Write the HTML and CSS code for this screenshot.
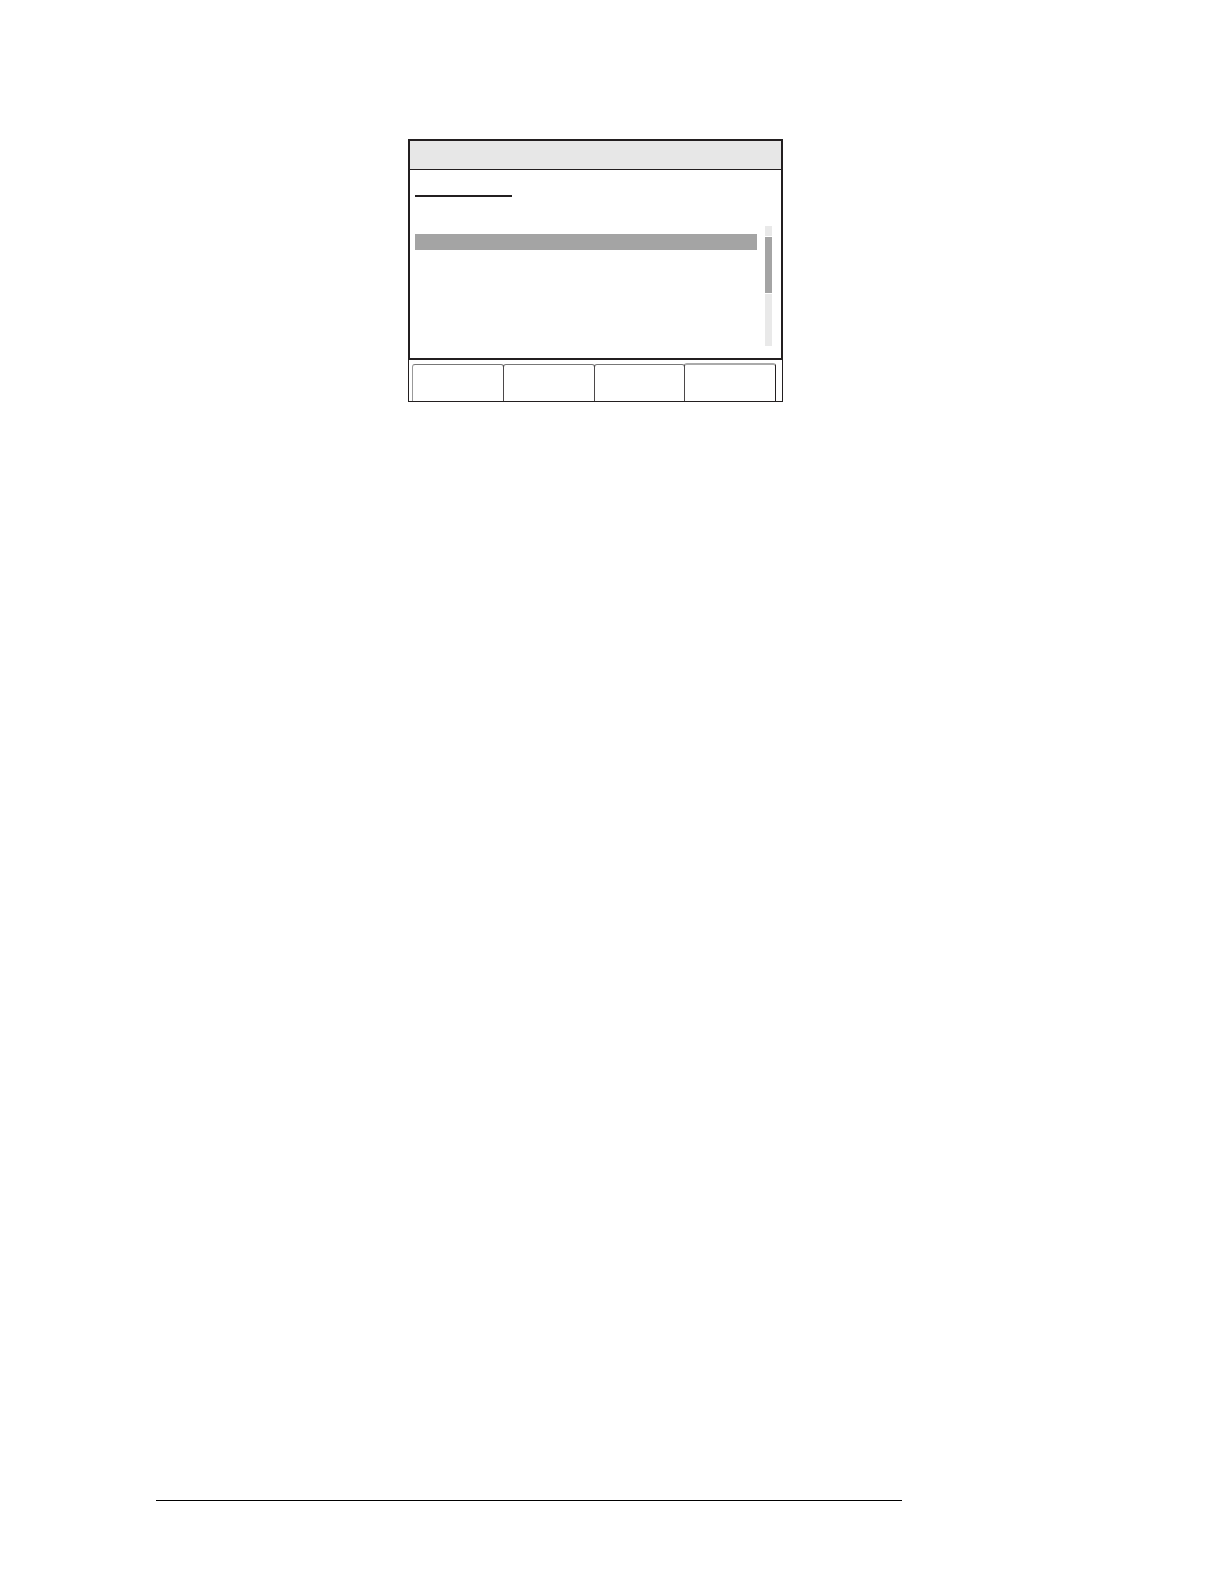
FILE: index.html
```html
<!DOCTYPE html>
<html lang="en">
<head>
  <meta charset="utf-8">
  <meta name="viewport" content="width=device-width, initial-scale=1">
  <title>Phone display</title>
  <link rel="stylesheet" href="styles.css">
</head>
<body>
  <main class="page">
    <section class="phone" aria-label="Phone display">
      <div class="screen">
        <header class="title-bar"></header>
        <div class="content">
          <div class="list">
            <div class="heading-rule"></div>
            <div class="selected-row"></div>
          </div>
          <div class="scrollbar" aria-hidden="true">
            <div class="track-above"></div>
            <div class="thumb"></div>
            <div class="track-below"></div>
          </div>
        </div>
      </div>
      <div class="softkeys">
        <button class="softkey softkey-first" type="button" aria-label="Softkey 1"></button>
        <button class="softkey" type="button" aria-label="Softkey 2"></button>
        <button class="softkey" type="button" aria-label="Softkey 3"></button>
        <button class="softkey softkey-last" type="button" aria-label="Softkey 4"></button>
      </div>
    </section>
    <hr class="footer-rule">
  </main>
</body>
</html>
```
FILE: styles.css
```css
* {
  box-sizing: border-box;
}

body {
  margin: 0;
  background: #fff;
  font-family: "Liberation Sans", sans-serif;
}

.page {
  display: flex;
  flex-direction: column;
  justify-content: space-between;
  min-height: 100vh;
  padding: 139px 322px 83px 156px;
}

.phone {
  width: 100%;
  max-width: 375px;
  margin-left: 252px;
}

.screen {
  border: 2px solid #231f20;
}

.title-bar {
  height: 29px;
  background: #e7e7e7;
  border-bottom: 1px solid #231f20;
}

.content {
  display: flex;
  gap: 8px;
  padding: 25px 9px 12px 5px;
}

.list {
  flex: 1;
}

.heading-rule {
  width: 97px;
  height: 2px;
  background: #231f20;
}

.selected-row {
  height: 16px;
  margin-top: 37px;
  background: #a4a4a4;
}

.scrollbar {
  display: flex;
  flex-direction: column;
  gap: 1px;
  width: 7px;
  margin-top: 31px;
}

.track-above,
.track-below {
  background: #e9e9e9;
}

.track-above {
  height: 10px;
}

.thumb {
  height: 56px;
  background: #a4a4a4;
}

.track-below {
  height: 52px;
}

.softkeys {
  display: flex;
  align-items: flex-end;
  padding: 3px 6px 0 4px;
  border: solid #231f20;
  border-width: 0 1px 1px;
}

.softkey {
  flex: 1;
  height: 37px;
  margin: 0 0 0 -1px;
  padding: 0;
  background: none;
  border: 1px solid #4b4849;
  border-top-color: #777;
  border-bottom: 0;
  border-radius: 3px 3px 0 0;
}

.softkey-first {
  border-left-color: #999;
}

.softkey-last {
  height: 38px;
  border-top: 2px solid #aaa;
  border-right-color: #231f20;
}

.footer-rule {
  width: 100%;
  height: 1px;
  margin: 0;
  background: #000;
  border: 0;
}
```
